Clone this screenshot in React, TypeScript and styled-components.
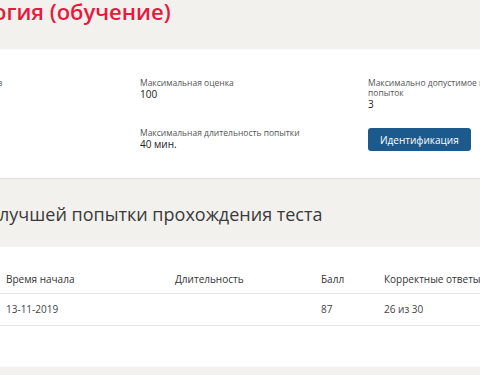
import React from "react";
import styled, { createGlobalStyle } from "styled-components";

const GlobalStyle = createGlobalStyle`
  html, body {
    margin: 0;
    padding: 0;
    background: #f2f1ee;
    overflow: hidden;
  }
  body {
    font-family: "Open Sans", "DejaVu Sans", sans-serif;
    color: #333;
  }
`;

const Page = styled.div`
  width: 480px;
  overflow: hidden;
`;

const Header = styled.div`
  height: 49px;
  background: #f2f1ee;
  overflow: hidden;
`;

const Title = styled.h1<{ $shift: number }>`
  margin: 0 0 0 ${(p) => -p.$shift}px;
  font-size: 22px;
  line-height: 23px;
  font-weight: 600;
  color: #e8193c;
  white-space: nowrap;
`;

const InfoPanel = styled.div`
  background: #fff;
  padding: 29px 0 27px;
  border-bottom: 1px solid #e2e0dc;
  overflow: hidden;
`;

const InfoGrid = styled.div`
  display: grid;
  grid-template-columns: repeat(3, 228px);
  row-gap: 19px;
  align-items: start;
  margin-left: -88px;
`;

const InfoItem = styled.div`
  display: flex;
  flex-direction: column;
  padding-right: 8px;
`;

const Label = styled.span`
  font-size: 8.5px;
  line-height: 10px;
  color: #555;
  white-space: pre-line;
`;

const Value = styled.span`
  font-size: 10px;
  line-height: 10px;
  color: #222;
  margin-top: 1px;
`;

const Button = styled.button`
  align-self: flex-start;
  height: 23px;
  padding: 0 12px;
  border: none;
  border-radius: 3px;
  background: #1c5a8d;
  color: #fff;
  font-family: "Open Sans", "DejaVu Sans", sans-serif;
  font-size: 10px;
  cursor: pointer;
`;

const Band = styled.div`
  height: 68px;
  padding-top: 23px;
  box-sizing: border-box;
  overflow: hidden;
`;

const Heading = styled.h2<{ $shift: number }>`
  margin: 0 0 0 ${(p) => -p.$shift}px;
  font-size: 18px;
  line-height: 24px;
  font-weight: 400;
  color: #3a3a3a;
  white-space: nowrap;
`;

const TablePanel = styled.div`
  background: #fff;
  padding-top: 25px;
  padding-bottom: 41px;
`;

const Row = styled.div<{ $head?: boolean }>`
  display: grid;
  grid-template-columns: 169px 146px 63px 1fr;
  padding: ${(p) => (p.$head ? "0 0 7px" : "8px 0 9px")};
  border-bottom: 1px solid #e4e4e4;
`;

const Cell = styled.div<{ $head?: boolean }>`
  padding-left: 6px;
  font-size: 10px;
  line-height: 14px;
  color: ${(p) => (p.$head ? "#333" : "#444")};
  white-space: nowrap;
`;

const info = [
  { label: "Количество вопросов", value: "30" },
  { label: "Максимальная оценка", value: "100" },
  { label: "Максимально допустимое количество\nпопыток", value: "3" },
  { label: "Проходной балл", value: "70" },
  { label: "Максимальная длительность попытки", value: "40 мин." },
];

const columns = ["Время начала", "Длительность", "Балл", "Корректные ответы"];
const results = [["13-11-2019", "", "87", "26 из 30"]];

export default function App() {
  return (
    <Page>
      <GlobalStyle />
      <Header>
        <Title $shift={88}>Психология (обучение)</Title>
      </Header>
      <InfoPanel>
        <InfoGrid>
          {info.map((it) => (
            <InfoItem key={it.label}>
              <Label>{it.label}</Label>
              <Value>{it.value}</Value>
            </InfoItem>
          ))}
          <InfoItem>
            <Button>Идентификация</Button>
          </InfoItem>
        </InfoGrid>
      </InfoPanel>
      <Band>
        <Heading $shift={106}>Результаты лучшей попытки прохождения теста</Heading>
      </Band>
      <TablePanel>
        <Row $head>
          {columns.map((c) => (
            <Cell $head key={c}>{c}</Cell>
          ))}
        </Row>
        {results.map((r, i) => (
          <Row key={i}>
            {r.map((c, j) => (
              <Cell key={j}>{c}</Cell>
            ))}
          </Row>
        ))}
      </TablePanel>
    </Page>
  );
}
